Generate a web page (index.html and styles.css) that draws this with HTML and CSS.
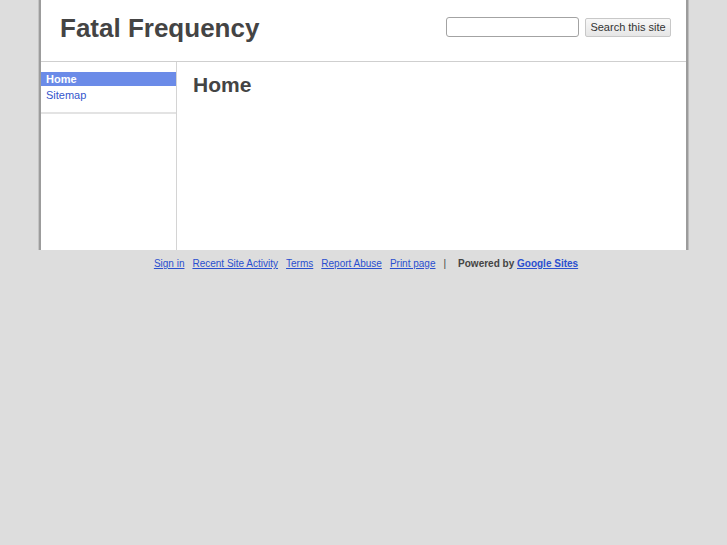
FILE: index.html
```html
<!DOCTYPE html>
<html>
<head>
<meta charset="utf-8">
<link rel="stylesheet" href="styles.css">
</head>
<body>
<div class="page">
  <div class="header">
    <div class="title">Fatal Frequency</div>
    <form class="search">
      <input class="search-input" type="text">
      <button class="search-btn" type="button">Search this site</button>
    </form>
  </div>
  <div class="main">
    <div class="sidebar">
      <ul class="nav">
        <li class="nav-item current">Home</li>
        <li class="nav-item"><a href="#">Sitemap</a></li>
      </ul>
    </div>
    <div class="content">
      <h1 class="heading">Home</h1>
    </div>
  </div>
</div>
<div class="footer">
  <a href="#">Sign in</a>
  <a href="#">Recent Site Activity</a>
  <a href="#">Terms</a>
  <a href="#">Report Abuse</a>
  <a href="#">Print page</a>
  <span class="sep">|</span>
  <span class="powered">Powered by <a href="#">Google Sites</a></span>
</div>
</body>
</html>
```
FILE: styles.css
```css
html, body {
  margin: 0;
  padding: 0;
  background: #dddddd;
  font-family: "Liberation Sans", Arial, sans-serif;
}
.page {
  margin-left: 39px;
  width: 645px;
  height: 250px;
  background: #ffffff;
  border-left: 2px solid #9c9c9c;
  border-right: 2px solid #9c9c9c;
  box-shadow: 1px 0 0 #bdbdbd, -1px 0 0 #c4c4c4;
  display: flex;
  flex-direction: column;
}
.header {
  height: 62px;
  box-sizing: border-box;
  border-bottom: 1px solid #cfcfcf;
  display: flex;
  justify-content: space-between;
  align-items: flex-start;
  padding: 0 15px 0 19px;
}
.title {
  margin-top: 13px;
  font-size: 26px;
  font-weight: bold;
  color: #444444;
  line-height: 30px;
}
.search {
  margin: 17px 0 0 0;
  display: flex;
  align-items: flex-start;
  gap: 6px;
}
.search-input {
  width: 133px;
  height: 20px;
  box-sizing: border-box;
  border: 1px solid #a3a3a3;
  border-radius: 3px;
  margin: 0;
  padding: 0 3px;
  background: #fff;
}
.search-btn {
  margin-top: 1px;
  width: 86px;
  height: 19px;
  box-sizing: border-box;
  border: 1px solid #c8c8c8;
  border-radius: 2px;
  background: linear-gradient(#f8f8f8, #e6e6e6);
  color: #333333;
  font-family: "Liberation Sans", Arial, sans-serif;
  font-size: 11px;
  padding: 0;
  line-height: 17px;
}
.main {
  flex: 1;
  display: flex;
}
.sidebar {
  width: 135px;
  border-right: 1px solid #d4d4d4;
}
.nav {
  list-style: none;
  margin: 0;
  padding: 10px 0 10px 0;
  border-bottom: 2px solid #e3e3e3;
}
.nav-item {
  height: 14px;
  line-height: 14px;
  font-size: 11px;
  padding-left: 5px;
  margin-bottom: 2px;
}
.nav-item:last-child {
  margin-bottom: 0;
}
.nav-item.current {
  background: #6b8be8;
  color: #ffffff;
  font-weight: bold;
}
.nav-item a {
  color: #3456cc;
  text-decoration: none;
}
.content {
  flex: 1;
  padding: 11px 16px;
}
.heading {
  margin: 0;
  font-size: 21px;
  line-height: 24px;
  font-weight: bold;
  color: #444444;
}
.footer {
  margin-top: 8px;
  margin-left: 5px;
  display: flex;
  justify-content: center;
  align-items: baseline;
  gap: 8px;
  font-size: 10px;
  line-height: 12px;
}
.footer a {
  color: #2a4fcf;
  text-decoration: underline;
}
.sep {
  color: #444444;
  margin-right: 4px;
}
.powered {
  font-weight: bold;
  color: #444444;
}
```
